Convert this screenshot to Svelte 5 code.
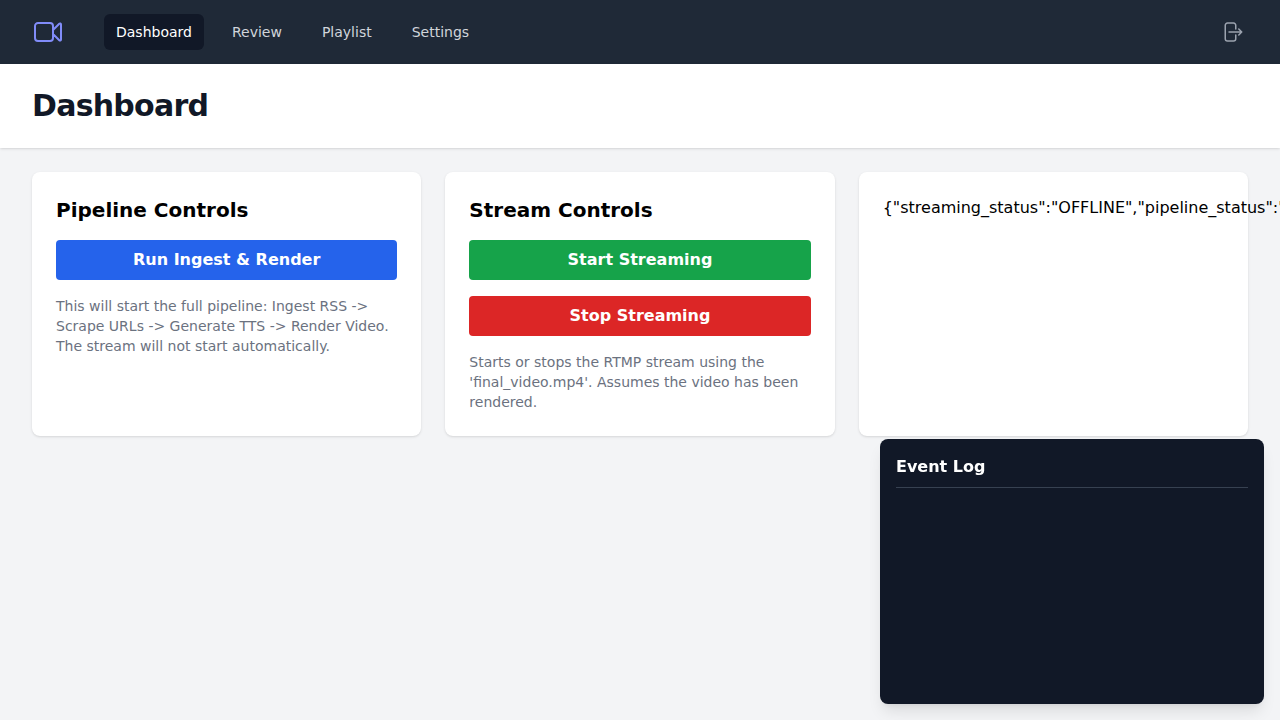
<script>
  const links = ['Dashboard', 'Review', 'Playlist', 'Settings'];
  const current = 'Dashboard';
  const status = JSON.stringify({ streaming_status: 'OFFLINE', pipeline_status: 'IDLE' });
</script>

<nav>
  <div class="left">
    <svg class="logo" viewBox="0 0 24 24" fill="none" stroke="currentColor" stroke-width="1.5" stroke-linecap="round" stroke-linejoin="round">
      <path d="m15.75 10.5 4.72-4.72a.75.75 0 0 1 1.28.53v11.38a.75.75 0 0 1-1.28.53l-4.72-4.72M4.5 18.75h9a2.25 2.25 0 0 0 2.25-2.25v-9a2.25 2.25 0 0 0-2.25-2.25h-9A2.25 2.25 0 0 0 2.25 7.5v9a2.25 2.25 0 0 0 2.25 2.25Z" />
    </svg>
    <div class="links">
      {#each links as link}
        <a href="#{link.toLowerCase()}" class:active={link === current}>{link}</a>
      {/each}
    </div>
  </div>
  <button class="logout" aria-label="Log out">
    <svg viewBox="0 0 24 24" fill="none" stroke="currentColor" stroke-width="1.5" stroke-linecap="round" stroke-linejoin="round">
      <path d="M15.75 9V5.25A2.25 2.25 0 0 0 13.5 3h-6a2.25 2.25 0 0 0-2.25 2.25v13.5A2.25 2.25 0 0 0 7.5 21h6a2.25 2.25 0 0 0 2.25-2.25V15m3 0 3-3m0 0-3-3m3 3H9" />
    </svg>
  </button>
</nav>
<header><h1>Dashboard</h1></header>
<main>
  <section class="card">
    <h2>Pipeline Controls</h2>
    <button class="action blue">Run Ingest &amp; Render</button>
    <p>This will start the full pipeline: Ingest RSS -&gt; Scrape URLs -&gt; Generate TTS -&gt; Render Video. The stream will not start automatically.</p>
  </section>
  <section class="card">
    <h2>Stream Controls</h2>
    <button class="action green">Start Streaming</button>
    <button class="action red">Stop Streaming</button>
    <p>Starts or stops the RTMP stream using the 'final_video.mp4'. Assumes the video has been rendered.</p>
  </section>
  <section class="card">{status}</section>
</main>
<aside>
  <h3>Event Log</h3>
</aside>

<style>
  :global(body) {
    background: #f3f4f6;
    color: #000;
    font: 16px/24px "DejaVu Sans", sans-serif;
    overflow: hidden;
  }
  :global(*) { box-sizing: border-box; }
  h1, h2, h3, p { margin: 0; }
  button { border: 0; font: inherit; cursor: pointer; }
  nav {
    display: flex;
    align-items: center;
    justify-content: space-between;
    height: 64px;
    padding: 0 32px;
    background: #1f2937;
  }
  .left { display: flex; align-items: center; gap: 40px; }
  .logo { display: block; width: 32px; height: 32px; color: #818cf8; }
  .links { display: flex; gap: 16px; }
  a {
    padding: 8px 12px;
    border-radius: 6px;
    color: #d1d5db;
    font-size: 14px;
    line-height: 20px;
    text-decoration: none;
  }
  a.active { background: #111827; color: #fff; }
  .logout { padding: 4px; border-radius: 50%; background: none; color: #9ca3af; }
  .logout svg { display: block; width: 24px; height: 24px; }
  header {
    padding: 24px 32px;
    background: #fff;
    box-shadow: 0 1px 3px rgb(0 0 0 / 0.1), 0 1px 2px -1px rgb(0 0 0 / 0.1);
  }
  h1 {
    color: #111827;
    font-size: 30px;
    line-height: 36px;
    font-weight: 700;
    letter-spacing: -0.75px;
  }
  main {
    display: grid;
    grid-template-columns: repeat(3, minmax(0, 1fr));
    gap: 24px;
    padding: 24px 32px;
  }
  .card {
    padding: 24px;
    border-radius: 8px;
    background: #fff;
    box-shadow: 0 1px 3px rgb(0 0 0 / 0.1), 0 1px 2px -1px rgb(0 0 0 / 0.1);
  }
  h2 { margin-bottom: 16px; font-size: 20px; line-height: 28px; font-weight: 600; }
  .action {
    display: block;
    width: 100%;
    padding: 8px 16px;
    border-radius: 4px;
    color: #fff;
    font-weight: 700;
  }
  .action + .action { margin-top: 16px; }
  .blue { background: #2563eb; }
  .green { background: #16a34a; }
  .red { background: #dc2626; }
  p { margin-top: 16px; color: #6b7280; font-size: 14px; line-height: 20px; }
  aside {
    position: fixed;
    right: 16px;
    bottom: 16px;
    width: 384px;
    height: 265px;
    padding: 16px;
    border-radius: 8px;
    background: #111827;
    color: #fff;
    box-shadow: 0 10px 15px -3px rgb(0 0 0 / 0.1), 0 4px 6px -4px rgb(0 0 0 / 0.1);
  }
  h3 {
    padding-bottom: 8px;
    border-bottom: 1px solid #374151;
    font-size: 16px;
    line-height: 24px;
    font-weight: 700;
  }
</style>
